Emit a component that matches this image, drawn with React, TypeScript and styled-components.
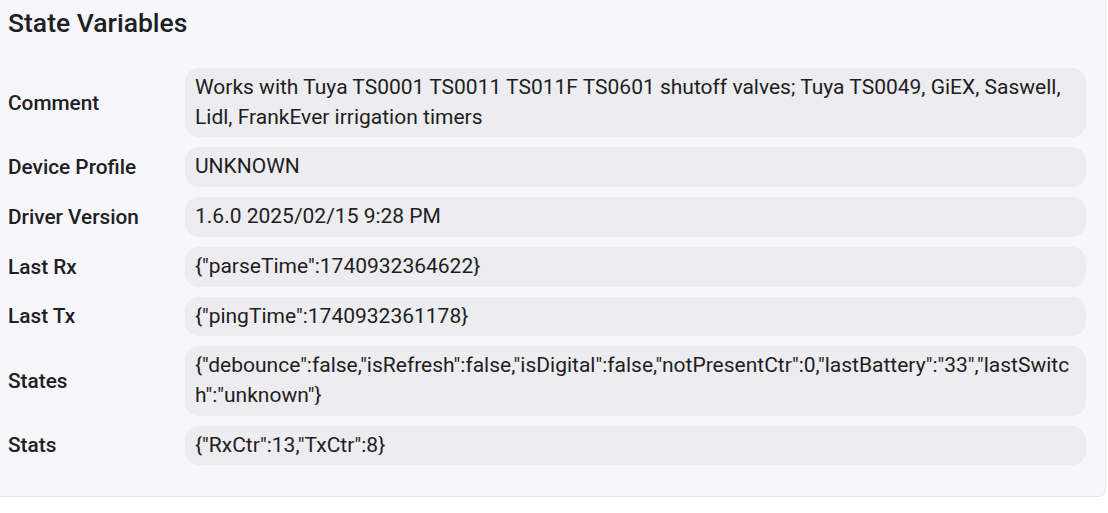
import React from "react";
import styled, { createGlobalStyle } from "styled-components";

const Global = createGlobalStyle`
  html, body { margin: 0; padding: 0; background: #ffffff; }
  body { font-family: Roboto, "Noto Sans", "Liberation Sans", sans-serif; color: #1e1e22; }
`;

const Panel = styled.section`
  width: 1106px;
  box-sizing: border-box;
  background: #f7f7fb;
  border-right: 1px solid #e7e7ec;
  border-bottom: 1px solid #e7e7ec;
  border-bottom-right-radius: 8px;
  padding: 7px 19px 31px 8px;
`;

const Title = styled.h2`
  margin: 0 0 30px 0;
  font-size: 26.5px;
  line-height: 31px;
  font-weight: 500;
  color: #202024;
`;

const Grid = styled.div`
  display: grid;
  grid-template-columns: 177px 1fr;
  row-gap: 10px;
  align-items: center;
`;

const Label = styled.div`
  font-size: 20.8px;
  font-weight: 500;
  line-height: 26px;
  color: #202024;
`;

const Value = styled.div`
  background: #ececf1;
  border-radius: 14px;
  padding: 5px 10px;
  font-size: 21px;
  line-height: 29.7px;
  color: #1e1e22;
  overflow-wrap: anywhere;
`;

const rows: [string, string][] = [
  ["Comment", "Works with Tuya TS0001 TS0011 TS011F TS0601 shutoff valves; Tuya TS0049, GiEX, Saswell, Lidl, FrankEver irrigation timers"],
  ["Device Profile", "UNKNOWN"],
  ["Driver Version", "1.6.0 2025/02/15 9:28 PM"],
  ["Last Rx", "{\"parseTime\":1740932364622}"],
  ["Last Tx", "{\"pingTime\":1740932361178}"],
  ["States", "{\"debounce\":false,\"isRefresh\":false,\"isDigital\":false,\"notPresentCtr\":0,\"lastBattery\":\"33\",\"lastSwitch\":\"unknown\"}"],
  ["Stats", "{\"RxCtr\":13,\"TxCtr\":8}"],
];

export default function App() {
  return (
    <>
      <Global />
      <Panel>
        <Title>State Variables</Title>
        <Grid>
          {rows.map(([k, v]) => (
            <React.Fragment key={k}>
              <Label>{k}</Label>
              <Value>{v}</Value>
            </React.Fragment>
          ))}
        </Grid>
      </Panel>
    </>
  );
}
